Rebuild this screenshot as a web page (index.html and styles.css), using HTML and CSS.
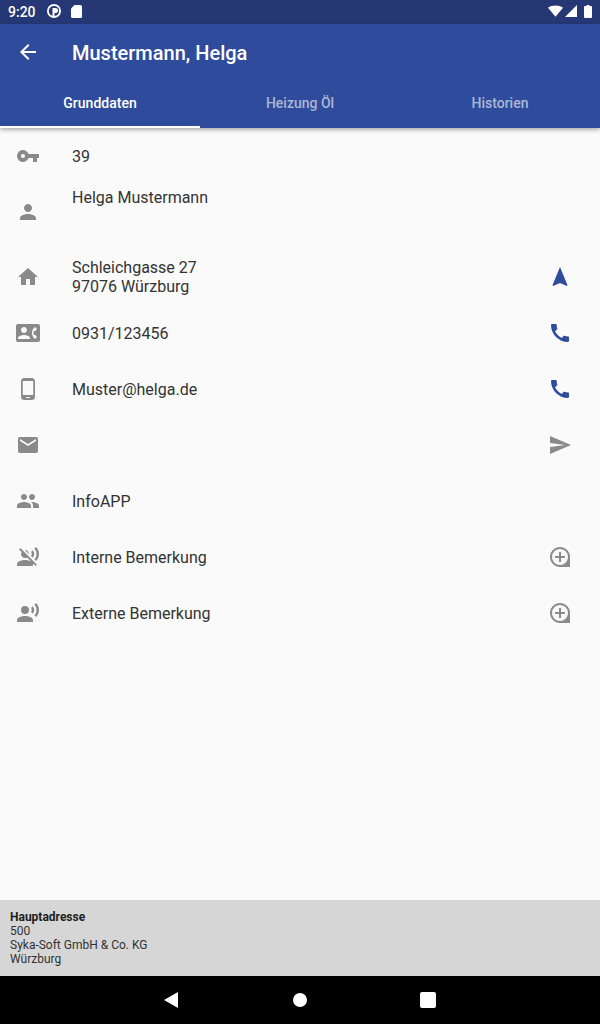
FILE: index.html
```html
<!DOCTYPE html>
<html lang="en">

<head>
    <meta charset="UTF-8">
    <meta name="viewport" content="width=device-width, initial-scale=1.0">
    <title>Mustermann, Helga</title>

    <link rel="stylesheet" href="styles.css">
</head>

<body>
    <div class="statusbar">
        <span class="time">9:20</span>
        <svg class="status-app" viewBox="0 0 14 14"><path fill-rule="evenodd" d="M7 0a7 7 0 1 0 0 14A7 7 0 0 0 7 0zM8 2.100A5 5 0 0 0 5.500 11.800V4h3a2.500 2.500 0 0 1 0 5h-1v3h-.1V12A5 5 0 0 0 8 2.100z"/></svg>
        <svg class="status-sd" viewBox="0 0 11 13"><path d="M3.500 0h6A1.500 1.500 0 0 1 11 1.500v10A1.500 1.500 0 0 1 9.500 13h-8A1.500 1.500 0 0 1 0 11.500V3.500z"/></svg>
        <span class="status-space"></span>
        <svg class="status-wifi" viewBox="0 0 16 12"><path d="M0 2.500C2 .9 4.900 0 8 0s6 .9 8 2.500L8 12z"/></svg>
        <svg class="status-signal" viewBox="0 0 12 12"><path d="M12 0v12H0z"/></svg>
        <svg class="status-battery" viewBox="0 0 8 13"><path d="M2.500 0h3v1H7a1 1 0 0 1 1 1v10a1 1 0 0 1-1 1H1a1 1 0 0 1-1-1V2a1 1 0 0 1 1-1h1.500z"/></svg>
    </div>

    <header class="appbar">
        <div class="toolbar">
            <svg class="icon back" viewBox="0 0 24 24"><path d="M20 11H7.830l5.590-5.590L12 4l-8 8 8 8 1.410-1.410L7.830 13H20v-2z"/></svg>
            <h1 class="title">Mustermann, Helga</h1>
        </div>
        <div class="tabs">
            <div class="tab active">Grunddaten</div>
            <div class="tab">Heizung Öl</div>
            <div class="tab">Historien</div>
        </div>
    </header>

    <main class="content">
        <div class="row">
            <svg class="icon" viewBox="0 0 24 24"><path d="M12.650 10C11.830 7.670 9.610 6 7 6c-3.310 0-6 2.690-6 6s2.690 6 6 6c2.610 0 4.830-1.670 5.650-4H17v4h4v-4h2v-4H12.650zM7 14c-1.100 0-2-.9-2-2s.9-2 2-2 2 .9 2 2-.9 2-2 2z"/></svg>
            <div class="text">39</div>
        </div>
        <div class="row row-name">
            <svg class="icon" viewBox="0 0 24 24"><path d="M12 12c2.210 0 4-1.790 4-4s-1.790-4-4-4-4 1.790-4 4 1.790 4 4 4zm0 2c-2.670 0-8 1.340-8 4v2h16v-2c0-2.660-5.330-4-8-4z"/></svg>
            <div class="text name">Helga Mustermann</div>
        </div>
        <div class="row">
            <svg class="icon" viewBox="0 0 24 24"><path d="M10 20v-6h4v6h5v-8h3L12 3 2 12h3v8z"/></svg>
            <div class="text">Schleichgasse 27<br>97076 Würzburg</div>
            <svg class="icon action blue" viewBox="0 0 24 24"><path d="M12 2L4.500 20.290l.71.71L12 18l6.790 3 .71-.71z"/></svg>
        </div>
        <div class="row">
            <svg class="icon" viewBox="0 0 24 24"><path d="M22 3H2C.9 3 0 3.900 0 5v14c0 1.100.9 2 2 2h20c1.100 0 1.990-.9 1.990-2L24 5c0-1.100-.9-2-2-2zM8 6c1.660 0 3 1.340 3 3s-1.340 3-3 3-3-1.340-3-3 1.340-3 3-3zm6 12H2v-1c0-2 4-3.100 6-3.100s6 1.100 6 3.100v1zm3.850-4h1.640L21 16l-1.990 1.990c-1.310-.98-2.280-2.380-2.730-3.990-.18-.64-.28-1.310-.28-2s.1-1.360.28-2c.45-1.620 1.420-3.010 2.730-3.990L21 8l-1.510 2h-1.640c-.22.63-.35 1.300-.35 2s.13 1.370.35 2z"/></svg>
            <div class="text">0931/123456</div>
            <svg class="icon action blue" viewBox="0 0 24 24"><path d="M20.010 15.380c-1.230 0-2.420-.2-3.530-.56-.35-.12-.74-.03-1.010.24l-1.570 1.970c-2.830-1.350-5.480-3.900-6.890-6.830l1.950-1.660c.27-.28.35-.67.24-1.020-.37-1.110-.56-2.300-.56-3.530 0-.54-.45-.99-.99-.99H4.190C3.650 3 3 3.240 3 3.990 3 13.280 10.730 21 20.010 21c.71 0 .99-.63.99-1.180v-3.450c0-.54-.45-.99-.99-.99z"/></svg>
        </div>
        <div class="row">
            <svg class="icon" viewBox="0 0 24 24"><path d="M16 1H8C6.340 1 5 2.340 5 4v16c0 1.660 1.340 3 3 3h8c1.660 0 3-1.340 3-3V4c0-1.660-1.340-3-3-3zm-2 20h-4v-1h4v1zm3.250-3H6.750V4h10.500v14z"/></svg>
            <div class="text">Muster@helga.de</div>
            <svg class="icon action blue" viewBox="0 0 24 24"><path d="M20.010 15.380c-1.230 0-2.420-.2-3.530-.56-.35-.12-.74-.03-1.010.24l-1.570 1.970c-2.830-1.350-5.480-3.900-6.890-6.830l1.950-1.660c.27-.28.35-.67.24-1.020-.37-1.110-.56-2.300-.56-3.530 0-.54-.45-.99-.99-.99H4.190C3.650 3 3 3.240 3 3.990 3 13.280 10.730 21 20.010 21c.71 0 .99-.63.99-1.180v-3.450c0-.54-.45-.99-.99-.99z"/></svg>
        </div>
        <div class="row">
            <svg class="icon" viewBox="0 0 24 24"><path d="M20 4H4c-1.100 0-1.990.9-1.990 2L2 18c0 1.100.9 2 2 2h16c1.100 0 2-.9 2-2V6c0-1.100-.9-2-2-2zm0 4l-8 5-8-5V6l8 5 8-5v2z"/></svg>
            <div class="text"></div>
            <svg class="icon action" viewBox="0 0 24 24"><path d="M2.010 21L23 12 2.010 3 2 10l15 2-15 2z"/></svg>
        </div>
        <div class="row">
            <svg class="icon" viewBox="0 0 24 24"><path d="M16 11c1.660 0 2.990-1.340 2.990-3S17.660 5 16 5c-1.660 0-3 1.340-3 3s1.340 3 3 3zm-8 0c1.660 0 2.990-1.340 2.990-3S9.660 5 8 5C6.340 5 5 6.340 5 8s1.340 3 3 3zm0 2c-2.330 0-7 1.170-7 3.500V19h14v-2.500c0-2.330-4.670-3.500-7-3.500zm8 0c-.29 0-.62.02-.97.05 1.160.84 1.970 1.970 1.970 3.450V19h6v-2.500c0-2.330-4.670-3.500-7-3.500z"/></svg>
            <div class="text">InfoAPP</div>
        </div>
        <div class="row">
            <svg class="icon" viewBox="0 0 24 24"><path d="M12.990 9.180c0-.06.01-.12.01-.18 0-2.210-1.790-4-4-4-.06 0-.12.01-.18.01l4.170 4.170zm-6.100-3.560L4.270 3 3 4.270l2.620 2.620C5.230 7.500 5 8.220 5 9c0 2.210 1.790 4 4 4 .78 0 1.500-.23 2.110-.62L19.730 21 21 19.730l-8.620-8.620-5.490-5.490zM9 15c-2.670 0-8 1.340-8 4v2h16v-2c0-2.660-5.330-4-8-4zm7.760-9.640l-1.680 1.690c.84 1.180.84 2.710 0 3.890l1.680 1.690c2.020-2.020 2.020-5.070 0-7.270zM20.070 2l-1.630 1.630c2.770 3.020 2.770 7.560 0 10.740L20.070 16c3.900-3.890 3.910-9.950 0-14z"/></svg>
            <div class="text">Interne Bemerkung</div>
            <svg class="icon action" viewBox="0 0 24 24"><path fill-rule="evenodd" d="M12 2C6.480 2 2 6.480 2 12s4.480 10 10 10h10V12C22 6.480 17.520 2 12 2zm0 2a8 8 0 1 1 0 16 8 8 0 0 1 0-16zm-1 3v4H7v2h4v4h2v-4h4v-2h-4V7z"/></svg>
        </div>
        <div class="row">
            <svg class="icon" viewBox="0 0 24 24"><circle cx="9" cy="9" r="4"/><path d="M9 15c-2.670 0-8 1.340-8 4v2h16v-2c0-2.660-5.330-4-8-4zm7.760-9.640l-1.680 1.690c.84 1.180.84 2.710 0 3.890l1.680 1.690c2.020-2.020 2.020-5.070 0-7.270zM20.070 2l-1.630 1.630c2.770 3.020 2.770 7.560 0 10.740L20.070 16c3.900-3.890 3.910-9.950 0-14z"/></svg>
            <div class="text">Externe Bemerkung</div>
            <svg class="icon action" viewBox="0 0 24 24"><path fill-rule="evenodd" d="M12 2C6.480 2 2 6.480 2 12s4.480 10 10 10h10V12C22 6.480 17.520 2 12 2zm0 2a8 8 0 1 1 0 16 8 8 0 0 1 0-16zm-1 3v4H7v2h4v4h2v-4h4v-2h-4V7z"/></svg>
        </div>
    </main>

    <footer class="address">
        <strong>Hauptadresse</strong><br>
        500<br>
        Syka-Soft GmbH &amp; Co. KG<br>
        Würzburg
    </footer>

    <nav class="navbar">
        <svg class="nav-back" viewBox="0 0 14 16"><path d="M14 0v16L0 8z"/></svg>
        <span class="nav-home"></span>
        <span class="nav-recent"></span>
    </nav>
</body>

</html>
```

FILE: styles.css
```css
* {
    box-sizing: border-box;
}

body {
    display: flex;
    flex-direction: column;
    height: 100vh;
    margin: 0;
    background-color: #fafafa;
    font-family: 'Roboto', sans-serif;
    color: #333;
    overflow: hidden;
}

.statusbar {
    display: flex;
    align-items: center;
    height: 24px;
    padding: 0 8px 2px;
    background-color: #253775;
    color: #fff;
    fill: #fff;
}

.time {
    font-size: 14px;
    font-weight: 500;
    width: 39px;
    margin-top: 2px;
}

.status-app {
    width: 14px;
    height: 14px;
}

.status-sd {
    width: 11px;
    height: 13px;
    margin-left: 10px;
}

.status-space {
    flex: 1;
}

.status-wifi {
    width: 15px;
    height: 12px;
}

.status-signal {
    width: 12px;
    height: 12px;
    margin-left: 2px;
}

.status-battery {
    width: 8px;
    height: 13px;
    margin-left: 7px;
}

.appbar {
    position: relative;
    background-color: #2f4b9b;
    color: #fff;
    box-shadow: 0 2px 4px rgba(0, 0, 0, 0.3);
}

.toolbar {
    display: flex;
    align-items: center;
    height: 56px;
    padding: 0 16px;
}

.title {
    margin: 2px 0 0 32px;
    font-size: 20px;
    font-weight: 500;
}

.tabs {
    display: grid;
    grid-template-columns: repeat(3, 1fr);
    height: 48px;
}

.tab {
    display: flex;
    align-items: center;
    justify-content: center;
    font-size: 14px;
    font-weight: 500;
    color: rgba(255, 255, 255, 0.6);
    border-bottom: 2px solid transparent;
}

.tab.active {
    color: #fff;
    border-bottom-color: #fff;
}

.icon {
    flex: none;
    width: 24px;
    height: 24px;
    fill: #8a8a8a;
}

.back {
    fill: #fff;
}

.content {
    flex: 1;
}

.row {
    display: flex;
    align-items: center;
    height: 56px;
    padding: 0 28px 0 16px;
    font-size: 16px;
    line-height: 19px;
}

.row-name {
    margin-bottom: 9px;
}

.text {
    flex: 1;
    margin-left: 32px;
}

.name {
    align-self: flex-start;
    margin-top: 4px;
}

.blue {
    fill: #2f4b9b;
}

.address {
    height: 76px;
    padding: 10px;
    background-color: #d6d6d6;
    font-size: 12px;
    line-height: 14px;
}

.address strong {
    color: #212121;
}

.navbar {
    display: flex;
    align-items: center;
    justify-content: center;
    height: 48px;
    background-color: #000;
}

.nav-back {
    width: 14px;
    height: 16px;
    margin-right: 115px;
    fill: #fff;
}

.nav-home {
    width: 14px;
    height: 14px;
    margin-right: 113px;
    border-radius: 50%;
    background-color: #fff;
}

.nav-recent {
    width: 16px;
    height: 16px;
    border-radius: 2px;
    background-color: #fff;
}
```
